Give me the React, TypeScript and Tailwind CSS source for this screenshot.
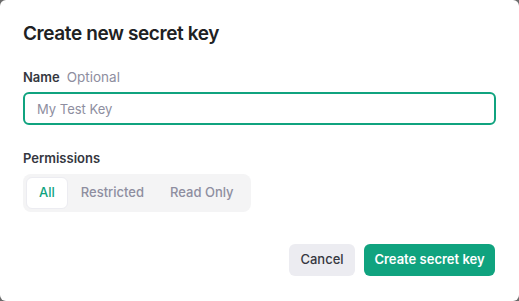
export default function App() {
  return (
    <div className="h-[301px] w-[519px] bg-[#6b6b6b]" style={{ fontFamily: "Inter, 'Noto Sans', sans-serif" }}>
      <div className="flex h-full w-full flex-col rounded-[6px] bg-white px-[23px] pt-[21px]">
        <h2 className="text-[19px] font-semibold leading-[26px] tracking-[-0.4px] text-[#202123]">Create new secret key</h2>

        <div className="mt-[21px] flex items-baseline gap-[7px] text-[13px] leading-[18px]">
          <span className="font-semibold text-[#353740]">Name</span>
          <span className="text-[13.5px] text-[#8e8ea0]">Optional</span>
        </div>
        <input
          placeholder="My Test Key"
          className="mt-[6px] h-[33px] w-full rounded-[6px] border-2 border-[#10a37f] px-[12px] text-[13px] text-[#353740] outline-none placeholder:text-[#8e8ea0]"
        />

        <div className="mt-[24px] text-[13px] font-semibold leading-[18px] text-[#353740]">Permissions</div>
        <div className="mt-[7px] flex h-[38px] w-[228px] items-center rounded-[8px] bg-[#f4f4f5] p-[3px] text-[13px] font-medium">
          <button className="h-[32px] rounded-[6px] border border-[#ececf1] bg-white px-[12px] text-[#10a37f]">All</button>
          <button className="h-[32px] px-[13px] text-[#8e8ea0]">Restricted</button>
          <button className="h-[32px] px-[13px] text-[#8e8ea0]">Read Only</button>
        </div>

        <div className="mt-[32px] flex justify-end gap-[9px] pr-[1px]">
          <button className="h-[32px] w-[66px] rounded-[6px] bg-[#ececf1] text-[13px] font-medium text-[#353740]">Cancel</button>
          <button className="h-[32px] w-[131px] rounded-[6px] bg-[#10a37f] text-[13px] font-semibold text-white">Create secret key</button>
        </div>
      </div>
    </div>
  );
}
